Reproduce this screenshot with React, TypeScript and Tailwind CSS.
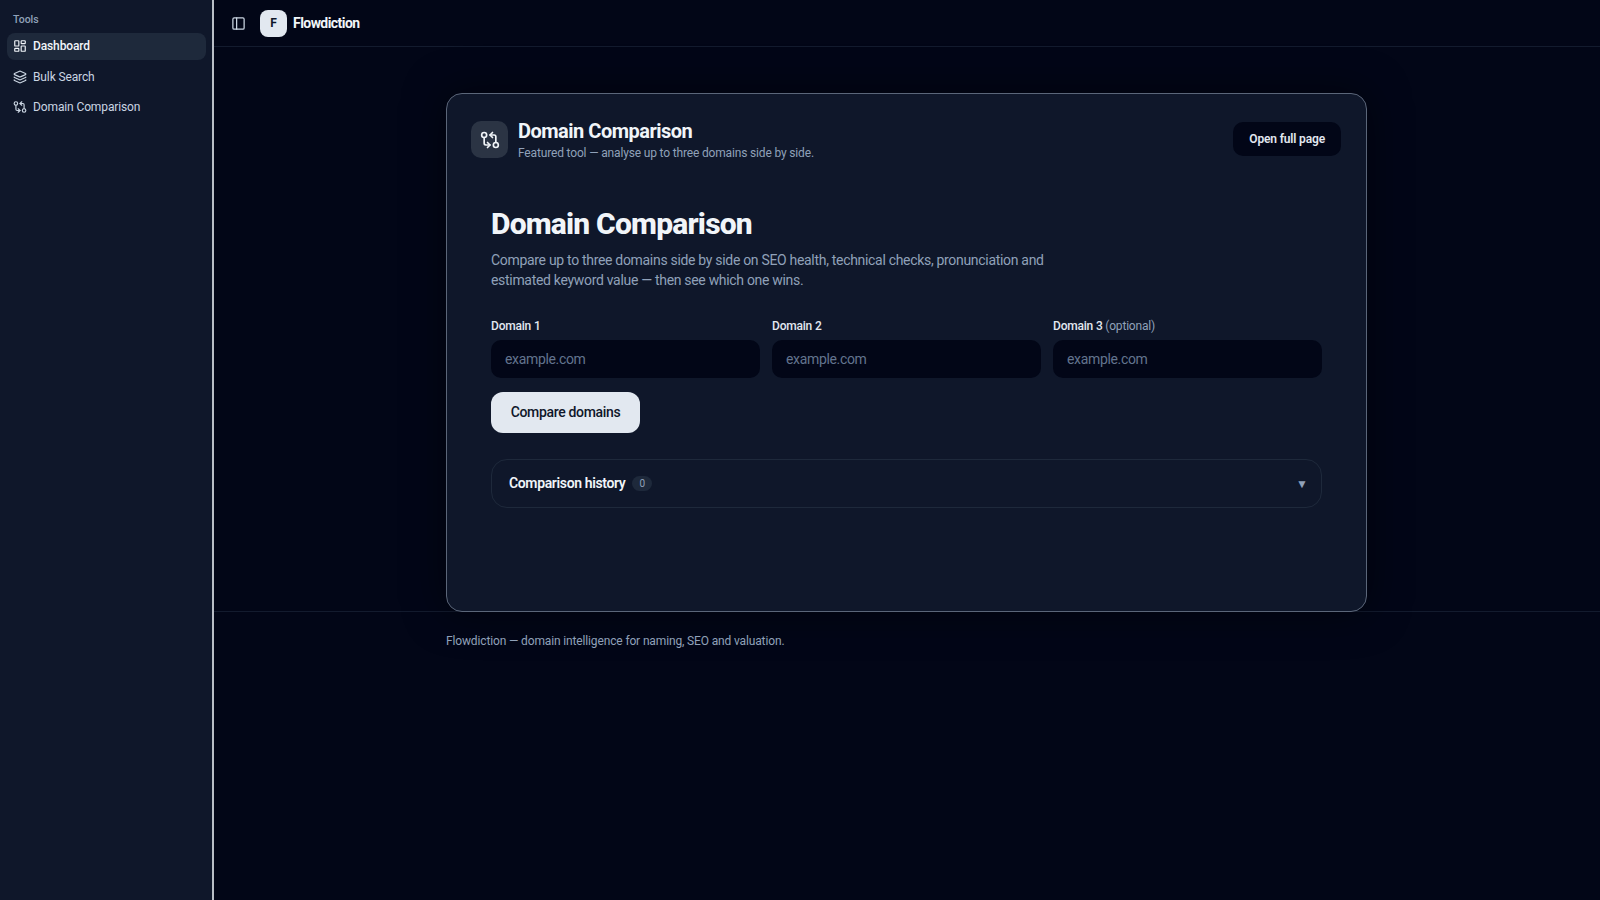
import { GitCompareArrows, LayoutDashboard, Layers, PanelLeft } from "lucide-react";

const navItems = [
  { label: "Dashboard", icon: LayoutDashboard, active: true },
  { label: "Bulk Search", icon: Layers, active: false },
  { label: "Domain Comparison", icon: GitCompareArrows, active: false },
];

const fields = [
  { label: "Domain 1", hint: "" },
  { label: "Domain 2", hint: "" },
  { label: "Domain 3", hint: "(optional)" },
];

const App = () => {
  return (
    <div className="flex h-[900px] overflow-hidden bg-[#020617] font-['Roboto',sans-serif] text-slate-200">
      <aside className="flex w-[214px] shrink-0 flex-col border-r-2 border-[#b9bec6] bg-[#0f172a] pl-[7px] pr-[6px] pt-3">
        <div className="px-[6px] text-[10.5px] font-medium leading-4 text-slate-400">Tools</div>
        <nav className="mt-[5px] flex flex-col gap-[3px]">
          {navItems.map((item) => (
            <a
              key={item.label}
              className={`flex h-[27px] items-center gap-[6px] rounded-lg px-[6px] text-[12px] leading-4 tracking-[-0.12px] ${
                item.active ? "bg-[#1e293b] pb-[1px] font-medium text-slate-100" : "text-slate-300"
              }`}
            >
              <item.icon size={14} strokeWidth={2} />
              {item.label}
            </a>
          ))}
        </nav>
      </aside>

      <div className="flex min-w-0 flex-1 flex-col">
        <header className="flex h-[47px] shrink-0 items-center gap-[14px] border-b border-[#131b2e] px-[17px]">
          <PanelLeft size={15} strokeWidth={2} className="text-slate-300" />
          <div className="flex items-center gap-[6px]">
            <div className="flex h-[27px] w-[27px] items-center justify-center rounded-lg bg-[#e2e8f0] text-[12px] font-bold text-[#0f172a]">
              F
            </div>
            <span className="text-[14px] font-bold tracking-[-0.55px] text-slate-100">Flowdiction</span>
          </div>
        </header>

        <main className="flex h-[565px] shrink-0 justify-center border-b border-[#131b2e] pr-[1px] pt-[46px]">
          <section className="h-[519px] w-[921px] rounded-2xl border border-[#5b6679] bg-[#0f172a] p-6 shadow-[0_0_40px_rgba(0,0,0,0.5)]">
            <div className="flex items-center justify-between pr-[1px]">
              <div className="flex items-center gap-[10px]">
                <div className="flex h-[37px] w-[37px] items-center justify-center rounded-[10px] bg-[#2b3444]">
                  <GitCompareArrows size={20} strokeWidth={2} className="text-slate-100" />
                </div>
                <div>
                  <h2 className="text-[20px] font-bold leading-[26px] tracking-tight text-slate-100">Domain Comparison</h2>
                  <p className="mt-[1px] text-[12px] leading-[16px] tracking-[-0.16px] text-slate-400">
                    Featured tool — analyse up to three domains side by side.
                  </p>
                </div>
              </div>
              <button className="mb-[1px] h-[34px] rounded-[10px] bg-[#020617] px-4 text-[12px] font-semibold tracking-[-0.15px] text-slate-200">
                Open full page
              </button>
            </div>

            <div className="pl-[20px] pr-[20px] pt-[43px]">
              <h1 className="text-[30px] font-extrabold leading-[40px] tracking-[-0.8px] text-slate-100">Domain Comparison</h1>
              <p className="mt-[6px] max-w-[576px] text-[14px] leading-[20px] tracking-[-0.31px] text-slate-400">
                Compare up to three domains side by side on SEO health, technical checks, pronunciation and estimated
                keyword value — then see which one wins.
              </p>

              <div className="mt-[28px] grid grid-cols-3 gap-3">
                {fields.map((field) => (
                  <label key={field.label} className="block text-[12px] font-medium leading-4 tracking-[-0.2px] text-slate-200">
                    {field.label} {field.hint && <span className="font-normal text-slate-400">{field.hint}</span>}
                    <input
                      placeholder="example.com"
                      className="mt-[6px] block h-[38px] w-full rounded-[10px] bg-[#020617] px-[14px] text-[14px] font-normal tracking-[-0.34px] outline-none placeholder:text-slate-500"
                    />
                  </label>
                ))}
              </div>

              <button className="mt-[14px] h-[41px] w-[149px] rounded-xl bg-[#e2e8f0] pb-[1px] text-[14px] font-medium tracking-[-0.34px] text-[#0f172a]">
                Compare domains
              </button>

              <div className="mt-[26px] flex h-[49px] items-center justify-between rounded-2xl border border-[#1e293b] pl-[17px] pr-[13px]">
                <div className="flex items-center gap-[7px]">
                  <span className="mb-[1px] text-[14px] font-semibold tracking-[-0.36px] text-slate-100">Comparison history</span>
                  <span className="rounded-full bg-[#1e293b] px-[7px] text-[10px] leading-[15px] text-slate-400">0</span>
                </div>
                <span className="text-[12px] text-slate-400">▼</span>
              </div>
            </div>
          </section>
        </main>

        <footer className="flex justify-center pr-[1px] pt-[21px]">
          <p className="w-[921px] text-[12px] leading-4 tracking-[-0.14px] text-slate-400">
            Flowdiction — domain intelligence for naming, SEO and valuation.
          </p>
        </footer>
      </div>
    </div>
  );
};

export default App;
